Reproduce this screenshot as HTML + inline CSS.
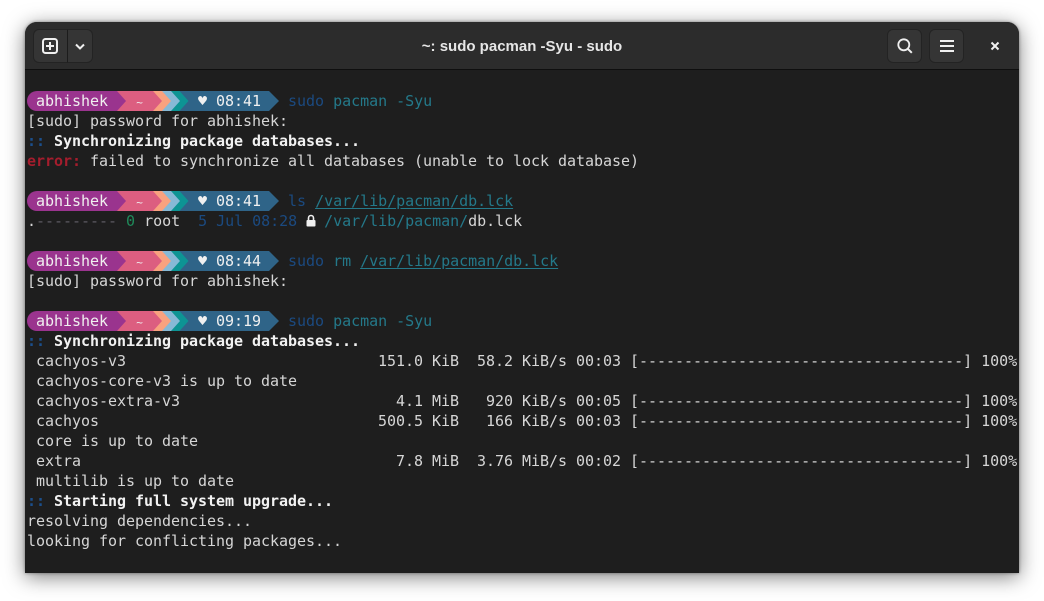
<!DOCTYPE html>
<html><head><meta charset="utf-8"><style>
html,body{margin:0;padding:0;width:1044px;height:601px;overflow:hidden;background:#fff}
#win{position:absolute;left:25px;top:22px;width:994px;height:551px;background:#1e1e1e;border-radius:12px 12px 0 0;box-shadow:0 4px 20px rgba(0,0,0,.5),0 0 3px rgba(0,0,0,.4);overflow:hidden}
#bar{position:absolute;left:0;top:0;width:994px;height:47px;background:#2c2c2c;border-bottom:1px solid #0f0f0f}
#title{position:absolute;left:0;top:0;width:994px;text-align:center;font:bold 15px/49px "Liberation Sans",sans-serif;color:#e6e6e6}
.btn{position:absolute;top:7px;height:32px;background:#353535;border:1px solid #232323;box-sizing:content-box}
.row{position:absolute;left:27px;height:20px;font:15px/20px "DejaVu Sans Mono",monospace;letter-spacing:-0.03px;color:#d6d6d6;white-space:pre}
b{color:#f2f2f2}
.s{color:#1b4a80}.c{color:#24798a}.u{color:#24798a;text-decoration:underline;text-underline-offset:2px}
.bl{color:#1b4f8c;font-weight:bold}.r{color:#a51d2d;font-weight:bold}.g{color:#1f8a5a}.d{color:#5e5c64}
.t{display:inline-block;width:9px;font-size:11px;text-align:center;letter-spacing:0}
svg{position:absolute;overflow:visible}
</style></head><body>
<div id="win"><div id="bar"></div><div id="title">~: sudo pacman -Syu - sudo</div></div>

<div class="btn" style="left:33px;top:29px;width:33px;border-radius:6px 0 0 6px;border-right:none"></div>
<div class="btn" style="left:67px;top:29px;width:24px;border-radius:0 6px 6px 0;border-left:1px solid #1c1c1c"></div>
<div class="btn" style="left:887px;top:29px;width:33px;border-radius:6px"></div>
<div class="btn" style="left:929px;top:29px;width:33px;border-radius:6px"></div>

<svg style="left:0;top:0" width="1044" height="601" fill="none" stroke="#f0f0f0">
<rect x="43" y="39" width="14" height="14" rx="2.5" stroke-width="2"/>
<path d="M50 42v8M46 46h8" stroke-width="2"/>
<path d="M76 44.5l4 4 4-4" stroke-width="2"/>
<circle cx="903.8" cy="44.8" r="5.5" stroke-width="1.8"/><path d="M907.8 48.8l4 4" stroke-width="2"/>
<path d="M940 41h14M940 46h14M940 51h14" stroke-width="2"/>
<path d="M991.5 42.5l7 7M998.5 42.5l-7 7" stroke-width="2"/>
<g stroke="none" transform="translate(0,91)"><path fill="#2f6488" d="M170 0H269L279 10L269 20H170Z"/><path fill="#0d9494" d="M170 0H179.5L188.5 10L179.5 20H170Z"/><path fill="#86b9d6" d="M160 0H171L180 10L171 20H160Z"/><path fill="#f9a27f" d="M150 0H162L171 10L162 20H150Z"/><path fill="#dc5e80" d="M110 0H153L162 10L153 20H110Z"/><path fill="#9a348e" d="M37 0H117L126 10L117 20H37A10 10 0 0 1 37 0Z"/></g>
<g stroke="none" transform="translate(0,191)"><path fill="#2f6488" d="M170 0H269L279 10L269 20H170Z"/><path fill="#0d9494" d="M170 0H179.5L188.5 10L179.5 20H170Z"/><path fill="#86b9d6" d="M160 0H171L180 10L171 20H160Z"/><path fill="#f9a27f" d="M150 0H162L171 10L162 20H150Z"/><path fill="#dc5e80" d="M110 0H153L162 10L153 20H110Z"/><path fill="#9a348e" d="M37 0H117L126 10L117 20H37A10 10 0 0 1 37 0Z"/></g>
<g stroke="none" transform="translate(0,251)"><path fill="#2f6488" d="M170 0H269L279 10L269 20H170Z"/><path fill="#0d9494" d="M170 0H179.5L188.5 10L179.5 20H170Z"/><path fill="#86b9d6" d="M160 0H171L180 10L171 20H160Z"/><path fill="#f9a27f" d="M150 0H162L171 10L162 20H150Z"/><path fill="#dc5e80" d="M110 0H153L162 10L153 20H110Z"/><path fill="#9a348e" d="M37 0H117L126 10L117 20H37A10 10 0 0 1 37 0Z"/></g>
<g stroke="none" transform="translate(0,311)"><path fill="#2f6488" d="M170 0H269L279 10L269 20H170Z"/><path fill="#0d9494" d="M170 0H179.5L188.5 10L179.5 20H170Z"/><path fill="#86b9d6" d="M160 0H171L180 10L171 20H160Z"/><path fill="#f9a27f" d="M150 0H162L171 10L162 20H150Z"/><path fill="#dc5e80" d="M110 0H153L162 10L153 20H110Z"/><path fill="#9a348e" d="M37 0H117L126 10L117 20H37A10 10 0 0 1 37 0Z"/></g>
</svg>

<div class="row" style="top:91px"><span style="color:#f0f0f0"> abhishek   <span class="t">~</span>      ♥ 08:41   </span><span class="s">sudo</span> <span class="c">pacman -Syu</span></div>
<div class="row" style="top:111px">[sudo] password for abhishek:</div>
<div class="row" style="top:131px"><span class="bl">::</span> <b>Synchronizing package databases...</b></div>
<div class="row" style="top:151px"><span class="r">error:</span> failed to synchronize all databases (unable to lock database)</div>
<div class="row" style="top:191px"><span style="color:#f0f0f0"> abhishek   <span class="t">~</span>      ♥ 08:41   </span><span class="s">ls</span> <span class="u">/var/lib/pacman/db.lck</span></div>
<div class="row" style="top:211px">.<span class="d">---------</span> <span class="g">0</span> root  <span class="s">5 Jul 08:28</span>   <span class="c">/var/lib/pacman/</span>db.lck</div>
<svg style="left:306px;top:214px" width="10" height="14"><path d="M2.5 6V4a2.5 2.5 0 0 1 5 0V6" fill="none" stroke="#f0f0f0" stroke-width="1.6"/><rect x="0.5" y="6" width="9" height="6.5" rx="1" fill="#f0f0f0"/></svg>
<div class="row" style="top:251px"><span style="color:#f0f0f0"> abhishek   <span class="t">~</span>      ♥ 08:44   </span><span class="s">sudo</span> <span class="c">rm</span> <span class="u">/var/lib/pacman/db.lck</span></div>
<div class="row" style="top:271px">[sudo] password for abhishek:</div>
<div class="row" style="top:311px"><span style="color:#f0f0f0"> abhishek   <span class="t">~</span>      ♥ 09:19   </span><span class="s">sudo</span> <span class="c">pacman -Syu</span></div>
<div class="row" style="top:331px"><span class="bl">::</span> <b>Synchronizing package databases...</b></div>
<div class="row" style="top:351px"> cachyos-v3                            151.0 KiB  58.2 KiB/s 00:03 [------------------------------------] 100%</div>
<div class="row" style="top:371px"> cachyos-core-v3 is up to date</div>
<div class="row" style="top:391px"> cachyos-extra-v3                        4.1 MiB   920 KiB/s 00:05 [------------------------------------] 100%</div>
<div class="row" style="top:411px"> cachyos                               500.5 KiB   166 KiB/s 00:03 [------------------------------------] 100%</div>
<div class="row" style="top:431px"> core is up to date</div>
<div class="row" style="top:451px"> extra                                   7.8 MiB  3.76 MiB/s 00:02 [------------------------------------] 100%</div>
<div class="row" style="top:471px"> multilib is up to date</div>
<div class="row" style="top:491px"><span class="bl">::</span> <b>Starting full system upgrade...</b></div>
<div class="row" style="top:511px">resolving dependencies...</div>
<div class="row" style="top:531px">looking for conflicting packages...</div>
</body></html>
